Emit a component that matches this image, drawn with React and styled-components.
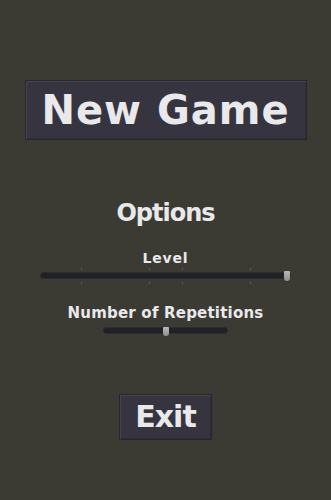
import React from "react";
import styled, { createGlobalStyle } from "styled-components";

const Global = createGlobalStyle`
  html, body { margin: 0; padding: 0; background: #3b3b34; }
  body { font-family: "DejaVu Sans", "Liberation Sans", sans-serif; }
`;

const Screen = styled.div`
  width: 331px;
  height: 500px;
  background: #3b3b34;
  display: flex;
  flex-direction: column;
  align-items: center;
  padding-top: 80px;
  box-sizing: border-box;
  color: #e9e9ec;
  font-weight: 700;
`;

const MenuButton = styled.button`
  box-sizing: border-box;
  width: ${(p) => p.$w}px;
  height: ${(p) => p.$h}px;
  margin-top: ${(p) => p.$mt || 0}px;
  background: #36343f;
  border: 1px solid #28272d;
  box-shadow: inset 1px 1px 0 #45434f, inset -1px -1px 0 #2e2d35;
  color: #e9e9ec;
  font-family: "DejaVu Sans", sans-serif;
  font-weight: 700;
  font-size: ${(p) => p.$fs}px;
  letter-spacing: ${(p) => p.$ls}px;
  line-height: 1;
  padding: 0;
  display: flex;
  align-items: center;
  justify-content: center;
  cursor: pointer;
`;

const Label = styled.div`
  margin-top: ${(p) => p.$mt}px;
  font-size: ${(p) => p.$fs}px;
  letter-spacing: ${(p) => p.$ls}px;
  line-height: 1;
  text-align: center;
  white-space: nowrap;
`;

const SliderWrap = styled.div`
  position: relative;
  width: ${(p) => p.$w}px;
  height: ${(p) => p.$h}px;
  margin-top: ${(p) => p.$mt}px;
`;

const Track = styled.div`
  position: absolute;
  left: 0;
  right: 0;
  top: ${(p) => p.$top}px;
  height: 5px;
  background: #202027;
  border-radius: 3px;
  box-shadow: 0 0 0 1px #2c2c30;
`;

const Thumb = styled.div`
  position: absolute;
  top: ${(p) => p.$top}px;
  width: 6px;
  height: ${(p) => p.$h}px;
  margin-left: -3px;
  background: linear-gradient(#b9b9b9, #8f8f8f);
  border-radius: 1px 1px 3px 3px;
`;

const Tick = styled.div`
  position: absolute;
  top: ${(p) => p.$top}px;
  width: 1px;
  height: 2px;
  background: #5b5b55;
`;

function Slider({ width, height, trackTop, thumbTop, thumbH, value, ticks = [], mt }) {
  return (
    <SliderWrap $w={width} $h={height} $mt={mt}>
      {ticks.map((t) => (
        <React.Fragment key={t}>
          <Tick $top={0} style={{ left: t }} />
          <Tick $top={height - 2} style={{ left: t }} />
        </React.Fragment>
      ))}
      <Track $top={trackTop} />
      <Thumb $top={thumbTop} $h={thumbH} style={{ left: value }} />
    </SliderWrap>
  );
}

export default function App() {
  return (
    <>
      <Global />
      <Screen>
        <MenuButton $w={282} $h={60} $fs={40} $ls={1}>New Game</MenuButton>
        <Label $mt={61} $fs={24} $ls={-1}>Options</Label>
        <Label $mt={26} $fs={14} $ls={0.8}>Level</Label>
        <Slider
          width={249}
          height={16}
          trackTop={5}
          thumbTop={3}
          thumbH={10}
          value={246}
          ticks={[40, 108, 141, 209]}
          mt={3}
        />
        <Label $mt={22} $fs={15} $ls={0.2}>Number of Repetitions</Label>
        <Slider width={123} height={12} trackTop={3} thumbTop={2} thumbH={9} value={62} mt={4} />
        <MenuButton $w={93} $h={46} $fs={30} $ls={-1} $mt={57}>Exit</MenuButton>
      </Screen>
    </>
  );
}
